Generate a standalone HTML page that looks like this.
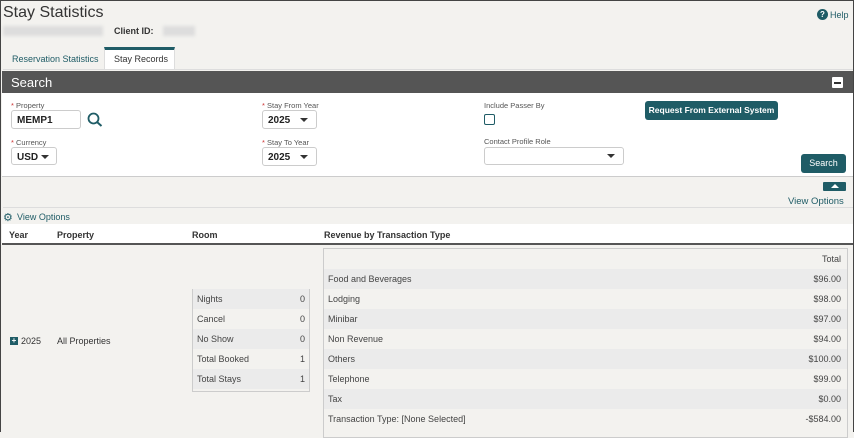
<!DOCTYPE html>
<html><head><style>
*{margin:0;padding:0;box-sizing:border-box}
body{width:854px;height:432px;overflow:hidden;background:#f3f2ef;font-family:"Liberation Sans",sans-serif;color:#333;font-size:9px;position:relative}
.a{position:absolute;white-space:nowrap}
.frame{position:absolute;left:0;top:0;width:854px;height:432px;border:1px solid #444;border-bottom:none;pointer-events:none}
.blur{background:#ddd;filter:blur(1.5px)}
.lbl{font-size:7.5px;color:#555}
.req{color:#c33}
.sel{position:absolute;background:#fff;border:1px solid #ccc;border-radius:3px;font-weight:bold;font-size:10px;padding:4px 0 0 5px;color:#222}
.tri{position:absolute;width:0;height:0;border-left:4px solid transparent;border-right:4px solid transparent;border-top:4px solid #333}
.btn{position:absolute;background:#1f5c66;color:#fff;border-radius:3px;text-align:center;font-size:9px}
.row{position:absolute;height:20px;font-size:9px;color:#444;line-height:21px}
</style></head><body>
<div class="a" style="left:3px;top:4px;font-size:16px;color:#333">Stay Statistics</div>
<div class="a blur" style="left:3px;top:26px;width:100px;height:10px"></div>
<div class="a" style="left:114px;top:26px;font-weight:bold;font-size:9px">Client ID:</div>
<div class="a blur" style="left:163px;top:26px;width:32px;height:10px"></div>
<div class="a" style="left:817px;top:9px;width:11px;height:11px;border-radius:50%;background:#1f5c66;color:#fff;font-size:8px;font-weight:bold;text-align:center;line-height:11px">?</div>
<div class="a" style="left:830px;top:10px;color:#1f5c66;font-size:9px">Help</div>
<div class="a" style="left:12px;top:54px;color:#1f5c66;font-size:9px">Reservation Statistics</div>
<div class="a" style="left:104px;top:47px;width:71px;height:22px;background:#fff;border-top:3px solid #1f5c66;border-right:1px solid #ddd;border-left:1px solid #ddd"></div>
<div class="a" style="left:114px;top:54px;font-size:9px;color:#333">Stay Records</div>
<div class="a" style="left:3px;top:69px;width:850px;height:1px;background:#ddd"></div>
<div class="a" style="left:2px;top:71px;width:851px;height:22px;background:#555"></div>
<div class="a" style="left:11px;top:75px;font-size:13px;color:#fff">Search</div>
<div class="a" style="left:832px;top:77px;width:11px;height:11px;background:#fff;border-radius:1px"><div style="margin:5px 2px;height:1.5px;background:#333"></div></div>
<div class="a" style="left:2px;top:93px;width:851px;height:84px;background:#fff;border-bottom:1px solid #ccc"></div>
<div class="a lbl" style="left:11px;top:101px"><span class="req">*</span> Property</div>
<div class="sel" style="left:11px;top:110px;width:70px;height:19px">MEMP1</div>
<svg class="a" style="left:87px;top:112px" width="16" height="15" viewBox="0 0 16 15"><circle cx="6.5" cy="6.5" r="5" fill="none" stroke="#1f5c66" stroke-width="1.8"/><line x1="10" y1="10" x2="14.5" y2="14" stroke="#1f5c66" stroke-width="2"/></svg>
<div class="a lbl" style="left:11px;top:138px"><span class="req">*</span> Currency</div>
<div class="sel" style="left:11px;top:147px;width:46px;height:18px">USD</div><div class="tri" style="left:41px;top:155px"></div>
<div class="a lbl" style="left:262px;top:101px"><span class="req">*</span> Stay From Year</div>
<div class="sel" style="left:262px;top:110px;width:55px;height:19px">2025</div><div class="tri" style="left:300px;top:118px"></div>
<div class="a lbl" style="left:262px;top:138px"><span class="req">*</span> Stay To Year</div>
<div class="sel" style="left:262px;top:147px;width:55px;height:19px">2025</div><div class="tri" style="left:300px;top:155px"></div>
<div class="a lbl" style="left:484px;top:101px">Include Passer By</div>
<div class="a" style="left:484px;top:114px;width:11px;height:11px;border:1.5px solid #1f5c66;border-radius:2px"></div>
<div class="a lbl" style="left:484px;top:137px">Contact Profile Role</div>
<div class="a" style="left:484px;top:147px;width:140px;height:18px;background:#fff;border:1px solid #ccc;border-radius:3px"></div><div class="tri" style="left:607px;top:154px"></div>
<div class="btn" style="left:645px;top:101px;width:133px;height:19px;line-height:19px;font-weight:bold;font-size:8.5px">Request From External System</div>
<div class="btn" style="left:801px;top:154px;width:45px;height:19px;line-height:19px">Search</div>
<div class="a" style="left:823px;top:182px;width:23px;height:9px;background:#1f5c66;border-radius:1px"><div style="margin:2px auto;width:0;height:0;border-left:4px solid transparent;border-right:4px solid transparent;border-bottom:4px solid #fff"></div></div>
<div class="a" style="left:788px;top:196px;color:#1f5c66;font-size:9.5px">View Options</div>
<div class="a" style="left:3px;top:207px;width:850px;height:1px;background:#ddd"></div>
<div class="a" style="left:3px;top:211px;color:#1f5c66;font-size:11px">&#x2699;</div>
<div class="a" style="left:17px;top:212px;color:#1f5c66;font-size:9px">View Options</div>
<div class="a" style="left:2px;top:224px;width:851px;height:21px;background:#fff;border-bottom:2px solid #555"></div>
<div class="a" style="left:9px;top:230px;font-weight:bold;font-size:9px">Year</div>
<div class="a" style="left:57px;top:230px;font-weight:bold;font-size:9px">Property</div>
<div class="a" style="left:192px;top:230px;font-weight:bold;font-size:9px">Room</div>
<div class="a" style="left:324px;top:230px;font-weight:bold;font-size:9px">Revenue by Transaction Type</div>
<div class="a" style="left:10px;top:337px;width:8px;height:8px;background:#1f5c66;color:#fff;font-size:8px;line-height:8px;text-align:center;font-weight:bold">+</div>
<div class="a" style="left:21px;top:336px;font-size:9px">2025</div>
<div class="a" style="left:57px;top:336px;font-size:9px">All Properties</div>
<div class="a" style="left:192px;top:289px;width:118px;height:103px;border:1px solid #ccc;background:#f3f2ef"></div>
<div class="row" style="left:193px;top:289px;width:116px;background:#ebebeb"><span style="margin-left:4px">Nights</span><span style="float:right;margin-right:4px">0</span></div>
<div class="row" style="left:193px;top:309px;width:116px"><span style="margin-left:4px">Cancel</span><span style="float:right;margin-right:4px">0</span></div>
<div class="row" style="left:193px;top:329px;width:116px;background:#ebebeb"><span style="margin-left:4px">No Show</span><span style="float:right;margin-right:4px">0</span></div>
<div class="row" style="left:193px;top:349px;width:116px"><span style="margin-left:4px">Total Booked</span><span style="float:right;margin-right:4px">1</span></div>
<div class="row" style="left:193px;top:369px;width:116px;background:#ebebeb"><span style="margin-left:4px">Total Stays</span><span style="float:right;margin-right:4px">1</span></div>
<div class="a" style="left:323px;top:248px;width:525px;height:190px;border:1px solid #ccc"></div>
<div class="row" style="left:324px;top:249px;width:523px"><span style="float:right;margin-right:6px">Total</span></div>
<div class="row" style="left:324px;top:269px;width:523px;background:#ebebeb"><span style="margin-left:4px">Food and Beverages</span><span style="float:right;margin-right:6px">$96.00</span></div>
<div class="row" style="left:324px;top:289px;width:523px"><span style="margin-left:4px">Lodging</span><span style="float:right;margin-right:6px">$98.00</span></div>
<div class="row" style="left:324px;top:309px;width:523px;background:#ebebeb"><span style="margin-left:4px">Minibar</span><span style="float:right;margin-right:6px">$97.00</span></div>
<div class="row" style="left:324px;top:329px;width:523px"><span style="margin-left:4px">Non Revenue</span><span style="float:right;margin-right:6px">$94.00</span></div>
<div class="row" style="left:324px;top:349px;width:523px;background:#ebebeb"><span style="margin-left:4px">Others</span><span style="float:right;margin-right:6px">$100.00</span></div>
<div class="row" style="left:324px;top:369px;width:523px"><span style="margin-left:4px">Telephone</span><span style="float:right;margin-right:6px">$99.00</span></div>
<div class="row" style="left:324px;top:389px;width:523px;background:#ebebeb"><span style="margin-left:4px">Tax</span><span style="float:right;margin-right:6px">$0.00</span></div>
<div class="row" style="left:324px;top:409px;width:523px"><span style="margin-left:4px">Transaction Type: [None Selected]</span><span style="float:right;margin-right:6px">-$584.00</span></div>
<div class="frame"></div>
</body></html>
